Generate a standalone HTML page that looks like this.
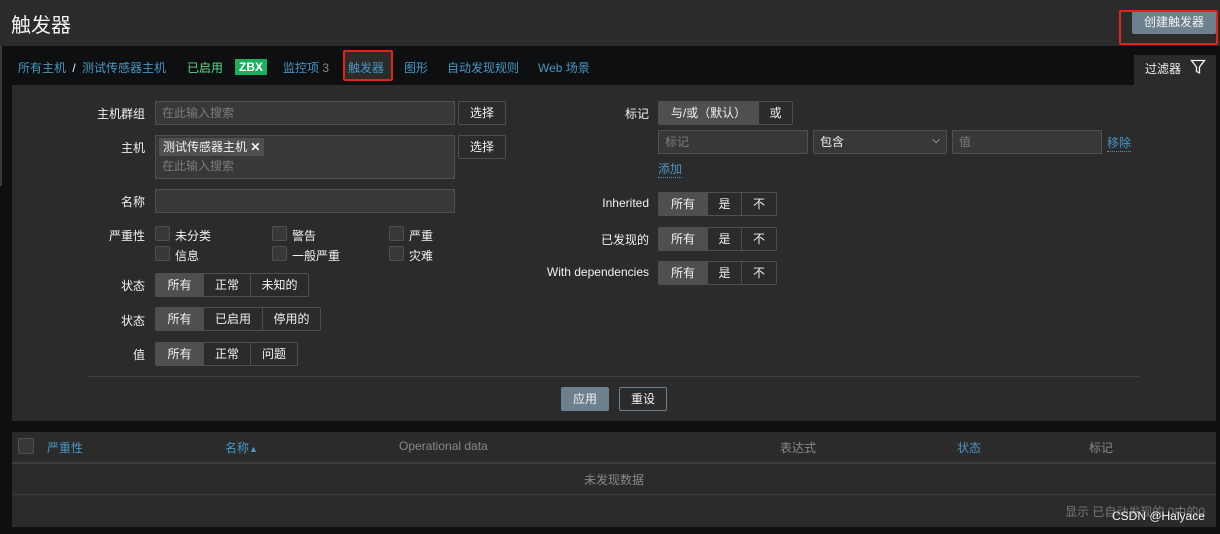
<!DOCTYPE html>
<html><head><meta charset="utf-8"><style>
*{box-sizing:border-box;margin:0;padding:0}
body{width:1220px;height:534px;background:#0e0f10;font-family:"Liberation Sans","Noto Sans CJK SC",sans-serif;font-size:12px;color:#f2f2f2;position:relative;overflow:hidden}
.a{position:absolute}
.lbl{position:absolute;text-align:right;color:#f2f2f2}
.inp{position:absolute;background:#383838;border:1px solid #4f4f4f;color:#7c7c7c;padding:3px 6px;height:24px;line-height:16px}
.btn{position:absolute;background:#2b2b2b;border:1px solid #4f4f4f;border-radius:2px;height:24px;line-height:22px;text-align:center;color:#f2f2f2}
.seg{position:absolute;display:flex;border:1px solid #4f4f4f;border-radius:2px;height:24px;background:#2b2b2b}
.seg span{display:block;line-height:22px;text-align:center;border-left:1px solid #4f4f4f}
.seg span:first-child{border-left:none;background:#4f4f4f}
.cb{position:absolute;width:15px;height:15px;background:#383838;border:1px solid #4f4f4f;border-radius:2px}
.link{color:#4796c4}
</style></head><body>
<div class="a" style="left:0;top:0;width:1220px;height:46px;background:#2b2b2b"></div>
<div class="a" style="left:11px;top:9px;font-size:20px;color:#f2f2f2">触发器</div>
<div class="a" style="left:1132px;top:11px;width:84px;height:23px;background:#6d808d;border-radius:2px;line-height:23px;text-align:center;font-size:12px">创建触发器</div>
<div class="a" style="left:1119px;top:10px;width:99px;height:35px;border:2px solid #e2231a;border-radius:2px"></div>
<div class="a" style="left:0;top:46px;width:2px;height:140px;background:#3a3a3a"></div>
<div class="a" style="left:18px;top:59px;font-size:12px;white-space:nowrap">
<span class="link">所有主机</span> <span style="color:#f2f2f2;margin:0 3px">/</span> <span class="link">测试传感器主机</span>
</div>
<div class="a" style="left:187px;top:59px;color:#59db8f">已启用</div>
<div class="a" style="left:235px;top:59px;background:#1aaf5d;color:#fff;font-weight:bold;padding:0 4px;height:16px;line-height:16px;font-size:12px">ZBX</div>
<div class="a link" style="left:283px;top:59px">监控项 <span style="color:#888">3</span></div>
<div class="a" style="left:343px;top:50px;width:50px;height:31px;border:2px solid #e2231a;border-radius:2px;background:#2b2b2b"></div>
<div class="a link" style="left:348px;top:59px">触发器</div>
<div class="a link" style="left:404px;top:59px">图形</div>
<div class="a link" style="left:447px;top:59px">自动发现规则</div>
<div class="a link" style="left:538px;top:59px">Web 场景</div>
<div class="a" style="left:1134px;top:55px;width:82px;height:31px;background:#2b2b2b"></div>
<div class="a" style="left:1145px;top:60px">过滤器</div>
<svg class="a" style="left:1190px;top:59px" width="16" height="16" viewBox="0 0 16 16"><path d="M1.5 1.5h13L9.5 8v6l-3-1.5V8z" fill="none" stroke="#f2f2f2" stroke-width="1.3"/></svg>
<div class="a" style="left:12px;top:85px;width:1204px;height:336px;background:#2b2b2b"></div>
<div class="lbl" style="left:60px;width:85px;top:105px">主机群组</div>
<div class="inp" style="left:155px;top:101px;width:300px">在此输入搜索</div>
<div class="btn" style="left:458px;top:101px;width:48px">选择</div>
<div class="lbl" style="left:60px;width:85px;top:139px">主机</div>
<div class="inp" style="left:155px;top:135px;width:300px;height:44px;padding:2px 3px">
<div style="display:inline-block;background:#4f4f4f;color:#f2f2f2;padding:0 4px;height:18px;line-height:18px">测试传感器主机 <b>✕</b></div>
<div style="padding:2px 3px 0">在此输入搜索</div></div>
<div class="btn" style="left:458px;top:135px;width:48px">选择</div>
<div class="lbl" style="left:60px;width:85px;top:193px">名称</div>
<div class="inp" style="left:155px;top:189px;width:300px"></div>
<div class="lbl" style="left:60px;width:85px;top:227px">严重性</div>
<div class="cb" style="left:155px;top:226px"></div><div class="a" style="left:175px;top:227px">未分类</div>
<div class="cb" style="left:272px;top:226px"></div><div class="a" style="left:292px;top:227px">警告</div>
<div class="cb" style="left:389px;top:226px"></div><div class="a" style="left:409px;top:227px">严重</div>
<div class="cb" style="left:155px;top:246px"></div><div class="a" style="left:175px;top:247px">信息</div>
<div class="cb" style="left:272px;top:246px"></div><div class="a" style="left:292px;top:247px">一般严重</div>
<div class="cb" style="left:389px;top:246px"></div><div class="a" style="left:409px;top:247px">灾难</div>
<div class="lbl" style="left:60px;width:85px;top:277px">状态</div>
<div class="seg" style="left:155px;top:273px"><span style="width:47px">所有</span><span style="width:47px">正常</span><span style="width:58px">未知的</span></div>
<div class="lbl" style="left:60px;width:85px;top:312px">状态</div>
<div class="seg" style="left:155px;top:307px"><span style="width:47px">所有</span><span style="width:59px">已启用</span><span style="width:58px">停用的</span></div>
<div class="lbl" style="left:60px;width:85px;top:346px">值</div>
<div class="seg" style="left:155px;top:342px"><span style="width:47px">所有</span><span style="width:47px">正常</span><span style="width:47px">问题</span></div>
<div class="lbl" style="left:560px;width:89px;top:105px">标记</div>
<div class="seg" style="left:658px;top:101px"><span style="width:99px">与/或（默认）</span><span style="width:34px">或</span></div>
<div class="inp" style="left:658px;top:130px;width:150px">标记</div>
<div class="inp" style="left:813px;top:130px;width:134px;color:#f2f2f2">包含<span style="position:absolute;right:6px;top:2px;font-size:10px">⌵</span></div>
<div class="inp" style="left:952px;top:130px;width:150px">值</div>
<div class="a link" style="left:1107px;top:134px;border-bottom:1px dotted #4796c4">移除</div>
<div class="a link" style="left:658px;top:160px;border-bottom:1px dotted #4796c4">添加</div>
<div class="lbl" style="left:500px;width:149px;top:196px">Inherited</div>
<div class="seg" style="left:658px;top:192px"><span style="width:48px">所有</span><span style="width:34px">是</span><span style="width:35px">不</span></div>
<div class="lbl" style="left:500px;width:149px;top:231px">已发现的</div>
<div class="seg" style="left:658px;top:227px"><span style="width:48px">所有</span><span style="width:34px">是</span><span style="width:35px">不</span></div>
<div class="lbl" style="left:500px;width:149px;top:265px">With dependencies</div>
<div class="seg" style="left:658px;top:261px"><span style="width:48px">所有</span><span style="width:34px">是</span><span style="width:35px">不</span></div>
<div class="a" style="left:88px;top:376px;width:1052px;height:1px;background:#3d3d3d"></div>
<div class="a" style="left:561px;top:387px;width:48px;height:24px;background:#6d808d;border-radius:2px;line-height:24px;text-align:center">应用</div>
<div class="a" style="left:619px;top:387px;width:48px;height:24px;border:1px solid #6d808d;border-radius:2px;line-height:22px;text-align:center;color:#f2f2f2">重设</div>
<div class="a" style="left:12px;top:432px;width:1204px;height:95px;background:#2b2b2b"></div>
<div class="a" style="left:12px;top:462px;width:1204px;height:2px;background:#3d3d3d"></div>
<div class="a" style="left:12px;top:494px;width:1204px;height:1px;background:#3d3d3d"></div>
<div class="cb" style="left:18px;top:438px;width:16px;height:16px"></div>
<div class="a link" style="left:47px;top:439px">严重性</div>
<div class="a link" style="left:225px;top:439px">名称<span style="font-size:9px">▲</span></div>
<div class="a" style="left:399px;top:439px;color:#888">Operational data</div>
<div class="a" style="left:780px;top:439px;color:#888">表达式</div>
<div class="a link" style="left:957px;top:439px">状态</div>
<div class="a" style="left:1089px;top:439px;color:#888">标记</div>
<div class="a" style="left:584px;top:471px;color:#888">未发现数据</div>
<div class="a" style="left:1065px;top:503px;color:#777">显示 已自动发现的 0中的0</div>
<div class="a" style="left:1112px;top:509px;color:#f2f2f2;font-size:12px">CSDN @Halyace</div>
</body></html>
